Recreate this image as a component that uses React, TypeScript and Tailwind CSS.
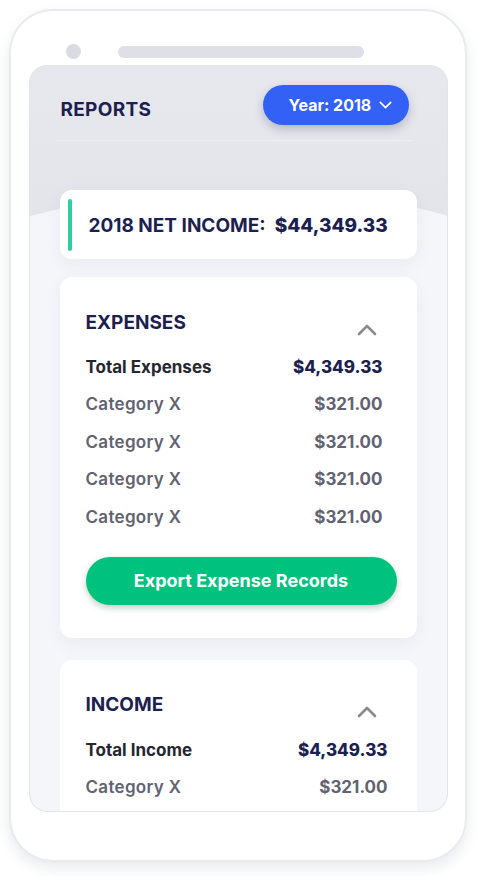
const expenses = [
  { label: "Category X", value: "$321.00" },
  { label: "Category X", value: "$321.00" },
  { label: "Category X", value: "$321.00" },
  { label: "Category X", value: "$321.00" },
];

function Chevron({ up, className }: { up?: boolean; className?: string }) {
  return (
    <svg viewBox="0 0 20 12" className={className} fill="none" stroke="currentColor" strokeWidth={2.6} strokeLinecap="round" strokeLinejoin="round">
      <polyline points={up ? "2,10 10,2 18,10" : "2,2 10,10 18,2"} />
    </svg>
  );
}

function SectionHead({ title, wide }: { title: string; wide?: boolean }) {
  return (
    <div className="flex items-start justify-between">
      <h3 className="text-[19px] font-bold text-[#1d1f4f] leading-none mt-[-1px]">
        {title}
      </h3>
      <Chevron
        up
        className={
          wide
            ? "w-[20px] h-[12px] text-[#8b8b8f] mr-[11px] mt-[10px]"
            : "w-[20px] h-[12px] text-[#8b8b8f] mr-[6px] mt-[10px]"
        }
      />
    </div>
  );
}

function Row({ label, value, total }: { label: string; value: string; total?: boolean }) {
  return (
    <div className="flex items-center justify-between h-[37.4px]">
      <span
        className={
          total
            ? "text-[17px] font-bold text-[#26262f]"
            : "text-[17px] font-semibold text-[#626271] tracking-[0.3px]"
        }
      >
        {label}
      </span>
      <span
        className={
          total
            ? "text-[17px] font-extrabold text-[#1d1f4f]"
            : "text-[17px] font-bold text-[#626271]"
        }
      >
        {value}
      </span>
    </div>
  );
}

export default function App() {
  return (
    <div className="w-[483px] h-[876px] bg-white pt-[9px] pl-[9px] font-['Inter',sans-serif]">
      <div className="w-[458px] h-[853px] rounded-[44px] border-2 border-[#e9eaef] bg-white shadow-[0_6px_14px_rgba(40,45,80,0.10)] flex flex-col items-center">
        {/* top sensor bar */}
        <div className="flex items-center w-full pl-[55px] pt-[27px] h-[54px]">
          <div className="w-[15px] h-[15px] rounded-full bg-[#d9dae2]" />
          <div className="ml-[37px] w-[246px] h-[12px] rounded-full bg-[#dfe0e7]" />
        </div>

        {/* screen */}
        <div className="relative w-[419px] h-[747px] rounded-[18px] border border-[#e2e4ea] overflow-hidden bg-gradient-to-b from-[#e7e8ed] to-[#d8d9e0]">
          <div className="absolute left-[-140px] top-[125px] w-[700px] h-[700px] bg-[#f5f6fa] rounded-tl-[350px_126px] rounded-tr-[350px_126px]" />

          <div className="relative">
            {/* header */}
            <div className="ml-[26px] mr-[35px] pt-[19px] border-b border-[#eeeff3] pb-[15px]">
              <div className="flex items-center justify-between">
                <h1 className="pl-[5px] mt-[10px] text-[19px] font-bold text-[#1d1f4f] tracking-[0.3px]">REPORTS</h1>
                <button className="mr-[3px] flex items-center gap-[8px] h-[40px] w-[146px] pl-[26px] rounded-full bg-[#3461f5] text-white text-[16px] font-bold shadow-[0_4px_10px_rgba(30,40,90,0.25)]">
                  Year: 2018
                  <Chevron className="w-[13px] h-[8px]" />
                </button>
              </div>
            </div>

            {/* net income */}
            <div className="ml-[30px] mt-[49px] w-[357px] h-[69px] rounded-[12px] bg-white shadow-[0_6px_18px_rgba(60,70,120,0.06)] flex items-center">
              <div className="ml-[8px] w-[4px] h-[52px] rounded-full bg-[#2dcf9f]" />
              <p className="ml-[17px] pt-[3px] text-[19px] font-bold text-[#1d1f4f]">
                2018 NET INCOME:<span className="ml-[9px] font-extrabold">$44,349.33</span>
              </p>
            </div>

            {/* expenses */}
            <div className="ml-[30px] mt-[18px] w-[357px] h-[361px] rounded-[12px] bg-white shadow-[0_6px_18px_rgba(60,70,120,0.06)] pl-[26px] pr-[34px] pt-[37px]">
              <SectionHead title="EXPENSES" />
              <div className="mt-[13px]">
                <Row label="Total Expenses" value="$4,349.33" total />
                {expenses.map((e, i) => (
                  <Row key={i} label={e.label} value={e.value} />
                ))}
              </div>
              <button className="mt-[21px] w-[311px] h-[48px] rounded-full bg-[#00c27f] text-white text-[18px] font-bold shadow-[0_3px_6px_rgba(0,80,50,0.25)]">
                Export Expense Records
              </button>
            </div>

            {/* income */}
            <div className="ml-[30px] mt-[22px] w-[357px] h-[200px] rounded-[12px] bg-white pl-[26px] pr-[29px] pt-[36px]">
              <SectionHead title="INCOME" wide />
              <div className="mt-[14px]">
                <Row label="Total Income" value="$4,349.33" total />
                <Row label="Category X" value="$321.00" />
              </div>
            </div>
          </div>
        </div>
      </div>
    </div>
  );
}
